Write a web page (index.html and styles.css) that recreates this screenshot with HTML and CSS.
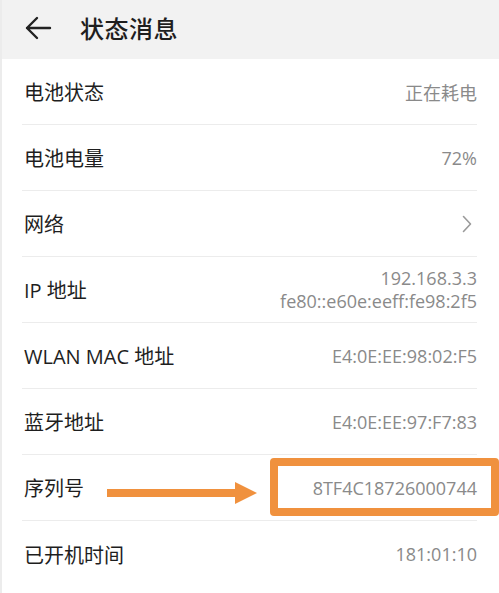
FILE: index.html
```html
<!DOCTYPE html>
<html lang="zh-CN">
<head>
<meta charset="utf-8">
<title>状态消息</title>
<link rel="stylesheet" href="styles.css">
</head>
<body>
<div class="page">
  <header class="header">
    <svg class="back" width="28" height="24" viewBox="0 0 28 24" aria-hidden="true">
      <path d="M26 12H3M13 2L3 12l10 10" fill="none" stroke="#222" stroke-width="2.4" stroke-linecap="round" stroke-linejoin="round"/>
    </svg>
    <h1 class="title">状态消息</h1>
  </header>
  <ul class="list">
    <li class="row"><span class="label">电池状态</span><span class="value">正在耗电</span></li>
    <li class="row"><span class="label">电池电量</span><span class="value">72%</span></li>
    <li class="row"><span class="label">网络</span>
      <svg class="chev" width="10" height="18" viewBox="0 0 10 18" aria-hidden="true"><path d="M1.5 1.5L8.5 9l-7 7.5" fill="none" stroke="#9a9a9a" stroke-width="1.6" stroke-linecap="round" stroke-linejoin="round"/></svg>
    </li>
    <li class="row"><span class="label">IP 地址</span><span class="value multi"><span>192.168.3.3</span><span>fe80::e60e:eeff:fe98:2f5</span></span></li>
    <li class="row"><span class="label">WLAN MAC 地址</span><span class="value">E4:0E:EE:98:02:F5</span></li>
    <li class="row"><span class="label">蓝牙地址</span><span class="value">E4:0E:EE:97:F7:83</span></li>
    <li class="row mark"><span class="label">序列号</span><span class="value">8TF4C18726000744</span>
      <span class="arrow" aria-hidden="true"><span class="shaft"></span><span class="head"></span></span>
      <span class="box" aria-hidden="true"></span>
    </li>
    <li class="row last"><span class="label">已开机时间</span><span class="value">181:01:10</span></li>
  </ul>
</div>
</body>
</html>
```
FILE: styles.css
```css
* { box-sizing: border-box; }
html, body { margin: 0; padding: 0; }
body {
  width: 499px;
  height: 593px;
  overflow: hidden;
  background: #fff;
  font-family: "Open Sans", "Noto Sans CJK SC", sans-serif;
}
.page {
  height: 593px;
  border-left: 2px solid #ececec;
  background: #fff;
}
.header {
  height: 59px;
  background: #f2f2f2;
  display: flex;
  align-items: center;
  padding-left: 22px;
  padding-bottom: 4px;
}
.back { display: block; }
.title {
  margin: 0 0 0 28px;
  font-size: 24px;
  font-weight: 500;
  color: #1e1e1e;
  font-family: "Noto Sans CJK SC", sans-serif;
  letter-spacing: 0.5px;
}
.list {
  list-style: none;
  margin: 0 22px 0 20px;
  padding: 0;
}
.row {
  position: relative;
  height: 66px;
  display: flex;
  align-items: center;
  justify-content: space-between;
  border-bottom: 1.5px solid #ececec;
  padding-left: 2px;
}
.row.last { border-bottom: none; }
.label {
  font-size: 20px;
  color: #1e1e1e;
  font-family: "Open Sans", "Noto Sans CJK SC", sans-serif;
}
.value {
  font-size: 18px;
  color: #8a8a8a;
  font-family: "Open Sans", "Noto Sans CJK SC", sans-serif;
}
.value.multi {
  display: flex;
  flex-direction: column;
  align-items: flex-end;
  line-height: 23px;
}
.chev { margin-right: 5px; }
.arrow {
  position: absolute;
  left: 85px;
  top: 27px;
  display: flex;
  align-items: center;
}
.shaft {
  width: 130px;
  height: 8px;
  background: #f0913e;
}
.head {
  width: 0;
  height: 0;
  border-top: 11px solid transparent;
  border-bottom: 11px solid transparent;
  border-left: 22px solid #f0913e;
  margin-left: -2px;
}
.box {
  position: absolute;
  left: 248px;
  right: -22px;
  top: 3px;
  height: 58px;
  border: 8px solid #f0913e;
  border-radius: 4px;
}
```
